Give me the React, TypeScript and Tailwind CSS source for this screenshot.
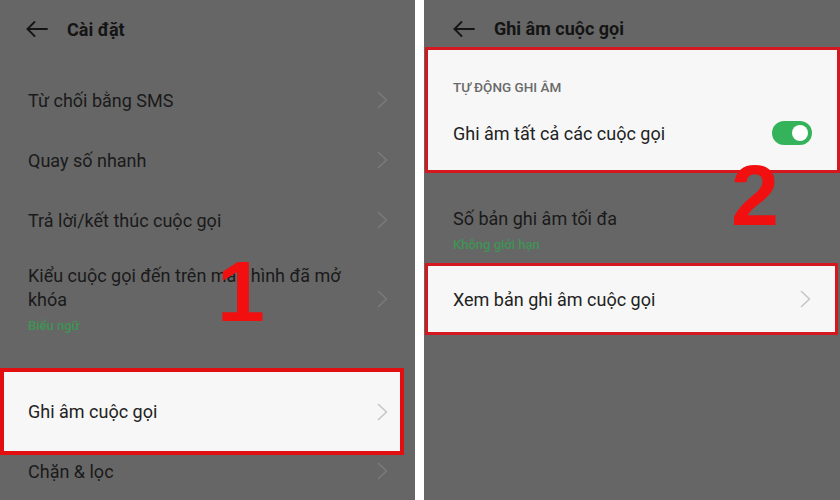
import React from "react";

const Chevron = ({ color }: { color: string }) => (
  <svg width="11" height="18" viewBox="0 0 11 18" fill="none">
    <polyline points="1.5,1.5 9.5,9 1.5,16.5" stroke={color} strokeWidth="1.6" strokeLinecap="round" strokeLinejoin="round" />
  </svg>
);

const BackArrow = () => (
  <svg width="22" height="16" viewBox="0 0 22 16" fill="none">
    <line x1="1.5" y1="8" x2="21" y2="8" stroke="#151515" strokeWidth="1.8" strokeLinecap="round" />
    <polyline points="8.5,1 1.5,8 8.5,15" stroke="#151515" strokeWidth="1.8" strokeLinecap="round" strokeLinejoin="round" />
  </svg>
);

const Row = ({ label }: { label: string }) => (
  <div className="h-[60px] flex items-center justify-between pl-[28px] pr-[27px]">
    <span className="text-[18px] text-[#1a1a1a]">{label}</span>
    <Chevron color="#7b7b7b" />
  </div>
);

export default function App() {
  return (
    <div
      className="relative w-[840px] h-[500px] flex bg-white overflow-hidden"
      style={{ fontFamily: "Roboto, 'Noto Sans', sans-serif" }}
    >
      {/* Left panel */}
      <div className="w-[415px] h-full bg-[#666666] flex flex-col">
        <div className="h-[58px] flex items-center pl-[26px] gap-[19px]">
          <BackArrow />
          <span className="text-[18px] font-bold text-[#141414]">Cài đặt</span>
        </div>
        <div className="h-[12px]" />
        <Row label="Từ chối bằng SMS" />
        <Row label="Quay số nhanh" />
        <Row label="Trả lời/kết thúc cuộc gọi" />
        <div className="h-[118px] pt-[14px] pl-[28px] pr-[27px]">
          <div className="flex items-center justify-between">
            <div className="w-[335px]">
              <div className="text-[18px] leading-[24px] text-[#1a1a1a]">
                Kiểu cuộc gọi đến trên màn hình đã mở khóa
              </div>
              <div className="text-[13px] leading-[16px] mt-[6px] font-medium text-[#3f9455]">Biểu ngữ</div>
            </div>
            <Chevron color="#7b7b7b" />
          </div>
        </div>
        <div className="w-[404px] h-[87px] border-[4px] border-[#e10f0f] bg-[#f7f7f7] flex items-center justify-between pl-[24px] pr-[12px]">
          <span className="text-[18px] text-[#222222]">Ghi âm cuộc gọi</span>
          <Chevron color="#c6c6c6" />
        </div>
        <div className="h-[32px] flex items-center justify-between pl-[28px] pr-[27px]">
          <span className="text-[18px] text-[#1a1a1a]">Chặn &amp; lọc</span>
          <Chevron color="#7b7b7b" />
        </div>
      </div>

      {/* Gap */}
      <div className="w-[9px] h-full bg-white" />

      {/* Right panel */}
      <div className="flex-1 h-full bg-[#666666] flex flex-col">
        <div className="h-[47px] flex items-center pl-[29px] gap-[19px] pt-[10px]">
          <BackArrow />
          <span className="text-[18px] font-bold text-[#141414]">Ghi âm cuộc gọi</span>
        </div>
        <div className="ml-[1px] h-[126px] border-[3px] border-[#d3181f] bg-[#f7f7f7] pl-[25px] pr-[25px] flex flex-col">
          <div className="h-[28px]" />
          <div className="h-[18px] flex items-center text-[13.5px] font-medium text-[#6a6a6a]">
            TỰ ĐỘNG GHI ÂM
          </div>
          <div className="h-[20px]" />
          <div className="h-[34px] flex items-center justify-between">
            <span className="text-[18px] text-[#222222]">Ghi âm tất cả các cuộc gọi</span>
            <div className="w-[40px] h-[24px] rounded-full bg-[#35b35a] flex items-center justify-end pr-[4px]">
              <div className="w-[16px] h-[16px] rounded-full bg-white" />
            </div>
          </div>
        </div>
        <div className="h-[90px] pl-[29px] pt-[33px]">
          <div className="text-[18px] leading-[26px] text-[#1a1a1a]">Số bản ghi âm tối đa</div>
          <div className="text-[13px] leading-[16px] mt-[5px] font-medium text-[#3f9455]">Không giới hạn</div>
        </div>
        <div className="ml-[1px] mr-[2px] h-[72px] border-[3px] border-[#d3181f] bg-[#f7f7f7] flex items-center justify-between pl-[25px] pr-[24px]">
          <span className="text-[18px] text-[#222222]">Xem bản ghi âm cuộc gọi</span>
          <Chevron color="#c6c6c6" />
        </div>
      </div>

      {/* Annotation numbers */}
      <div
        className="absolute left-[217px] top-[248px] text-[86px] font-bold leading-none text-[#f20f0f]"
        style={{ fontFamily: "'Liberation Sans', Arial, sans-serif" }}
      >
        1
      </div>
      <div
        className="absolute left-[731px] top-[152px] text-[86px] font-bold leading-none text-[#f20f0f]"
        style={{ fontFamily: "'Liberation Sans', Arial, sans-serif" }}
      >
        2
      </div>
    </div>
  );
}
